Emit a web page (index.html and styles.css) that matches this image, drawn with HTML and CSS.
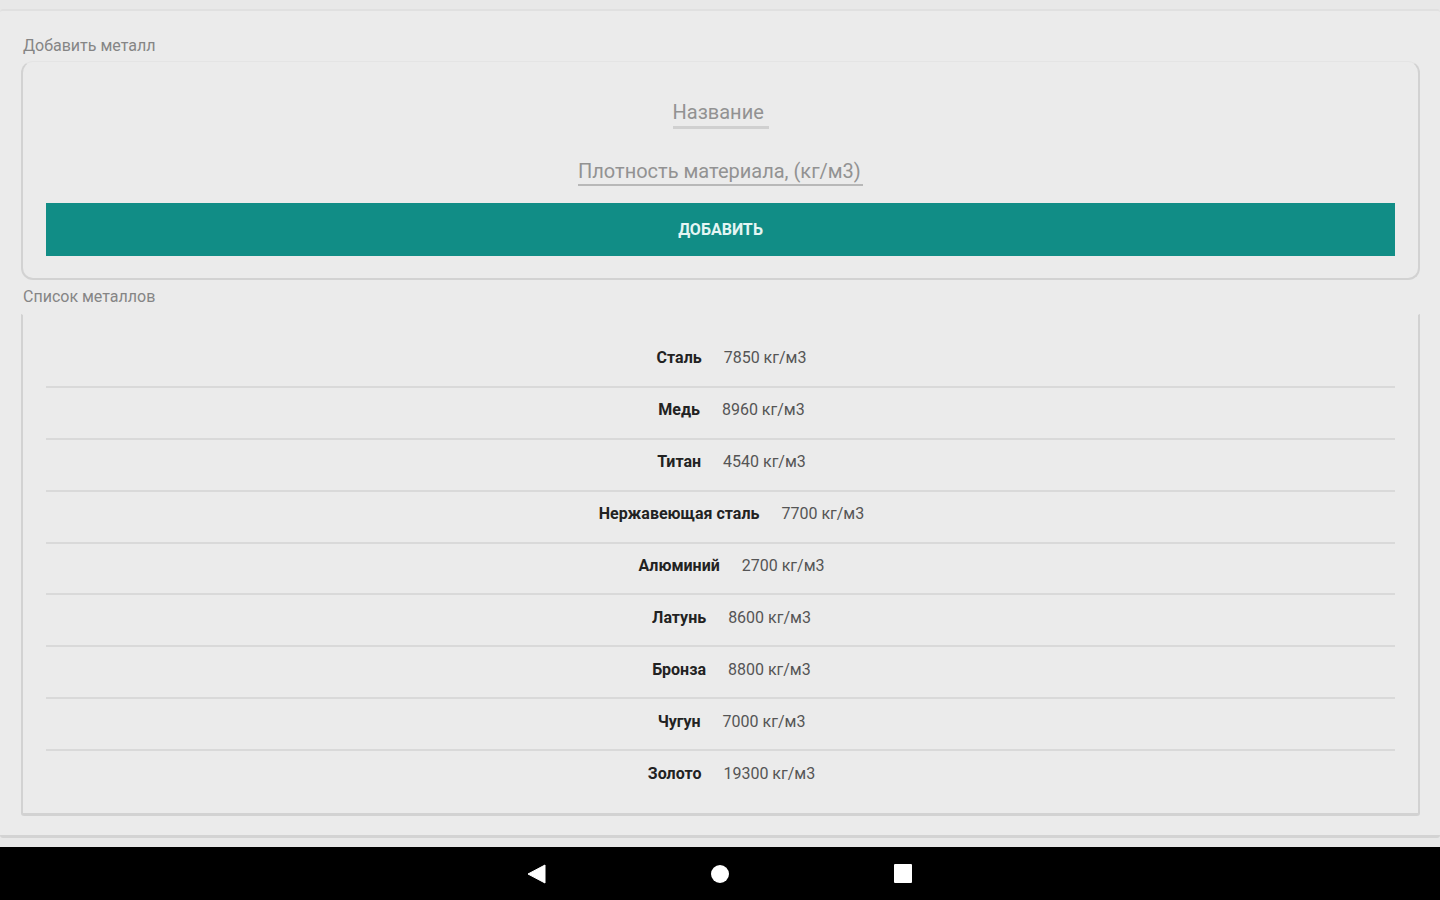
FILE: index.html
```html
<!DOCTYPE html>
<html lang="ru">
<head>
<meta charset="utf-8">
<meta name="viewport" content="width=device-width, initial-scale=1">
<title>Металлы</title>
<link rel="stylesheet" href="styles.css">
</head>
<body>
<main class="screen">
  <h2 class="caption">Добавить металл</h2>
  <form class="panel form">
    <input class="field field-name" type="text" placeholder="Название" aria-label="Название">
    <input class="field field-density" type="text" placeholder="Плотность материала, (кг/м3)" aria-label="Плотность материала, (кг/м3)">
    <button class="submit" type="button">ДОБАВИТЬ</button>
  </form>
  <h2 class="caption caption-list">Список металлов</h2>
  <section class="panel list-panel">
    <ul class="metals">
      <li class="metal"><b class="name">Сталь</b><span>7850 кг/м3</span></li>
      <li class="metal"><b class="name">Медь</b><span>8960 кг/м3</span></li>
      <li class="metal"><b class="name">Титан</b><span>4540 кг/м3</span></li>
      <li class="metal"><b class="name">Нержавеющая сталь</b><span>7700 кг/м3</span></li>
      <li class="metal"><b class="name">Алюминий</b><span>2700 кг/м3</span></li>
      <li class="metal"><b class="name">Латунь</b><span>8600 кг/м3</span></li>
      <li class="metal"><b class="name">Бронза</b><span>8800 кг/м3</span></li>
      <li class="metal"><b class="name">Чугун</b><span>7000 кг/м3</span></li>
      <li class="metal"><b class="name">Золото</b><span>19300 кг/м3</span></li>
    </ul>
  </section>
</main>
<nav class="navbar">
  <button class="nav-button" type="button" aria-label="Назад"><svg width="20" height="20" viewBox="0 0 20 20"><path d="M18 1v18L1 10z" fill="#fff" stroke="#fff" stroke-linejoin="round"/></svg></button>
  <button class="nav-button" type="button" aria-label="Домой"><svg width="20" height="20" viewBox="0 0 20 20"><circle cx="10" cy="10" r="9" fill="#fff"/></svg></button>
  <button class="nav-button" type="button" aria-label="Обзор"><svg width="20" height="20" viewBox="0 0 20 20"><rect x="1" y="0" width="18" height="19" rx="1" fill="#fff"/></svg></button>
</nav>
</body>
</html>
```
FILE: styles.css
```css
* {
  box-sizing: border-box;
}

body {
  margin: 0;
  min-height: 100vh;
  display: flex;
  flex-direction: column;
  background: #e8e8e8;
  color: #333;
  font-family: Roboto, "Noto Sans", sans-serif;
}

.screen {
  flex: 1;
  display: flex;
  flex-direction: column;
  margin: 9px 0 9px;
  padding: 24px 20px 19px 21px;
  background: #ebebeb;
  border-top: 2px solid #e0e0e0;
  border-bottom: 3px solid #d3d3d3;
  border-radius: 3px;
}

.caption {
  margin: 0;
  padding: 0 2px;
  height: 26px;
  font-size: 16px;
  line-height: 22px;
  font-weight: 400;
  color: #858585;
}

.caption-list {
  height: 34px;
  padding-top: 6px;
}

.panel {
  border: 2px solid #d2d2d2;
  border-top: 1px solid #e4e4e4;
}

.form {
  display: flex;
  flex-direction: column;
  align-items: center;
  padding: 31px 23px 22px;
  border-radius: 12px;
}

.field {
  height: 36px;
  padding: 4px 0 0;
  border: 0;
  border-bottom: 3px solid #d0d0d0;
  background: transparent;
  color: #333;
  font: 20px Roboto, "Noto Sans", sans-serif;
}

.field::placeholder {
  color: #929292;
  opacity: 1;
}

.field-name {
  width: 96px;
}

.field-density {
  width: 285px;
  padding-top: 8px;
  margin: 21px 0 17px;
  border-bottom: 2px solid #b8b8b8;
}

.submit {
  align-self: stretch;
  height: 53px;
  padding: 0;
  border: 0;
  background: #118d86;
  color: #e4f5f3;
  font: 700 16px Roboto, "Noto Sans", sans-serif;
}

.list-panel {
  flex: 1;
  display: flex;
  padding: 21px 23px 10px;
  border-top-color: transparent;
  border-bottom-width: 3px;
  border-radius: 0 0 3px 3px;
}

.metals {
  flex: 1;
  display: grid;
  grid-auto-rows: 1fr;
  margin: 0;
  padding: 0;
  list-style: none;
}

.metal {
  display: flex;
  align-items: center;
  justify-content: center;
  padding-bottom: 5px;
  border-bottom: 2px solid #d9d9d9;
  font-size: 16px;
  line-height: 20px;
  color: #555;
}

.metal:last-child {
  border-bottom-color: transparent;
}

.name {
  margin: 0 22px;
  color: #222;
}

.navbar {
  display: flex;
  justify-content: center;
  gap: 135px;
  height: 53px;
  background: #000;
}

.nav-button {
  display: grid;
  place-items: center;
  width: 48px;
  padding: 0;
  border: 0;
  background: transparent;
}
```
